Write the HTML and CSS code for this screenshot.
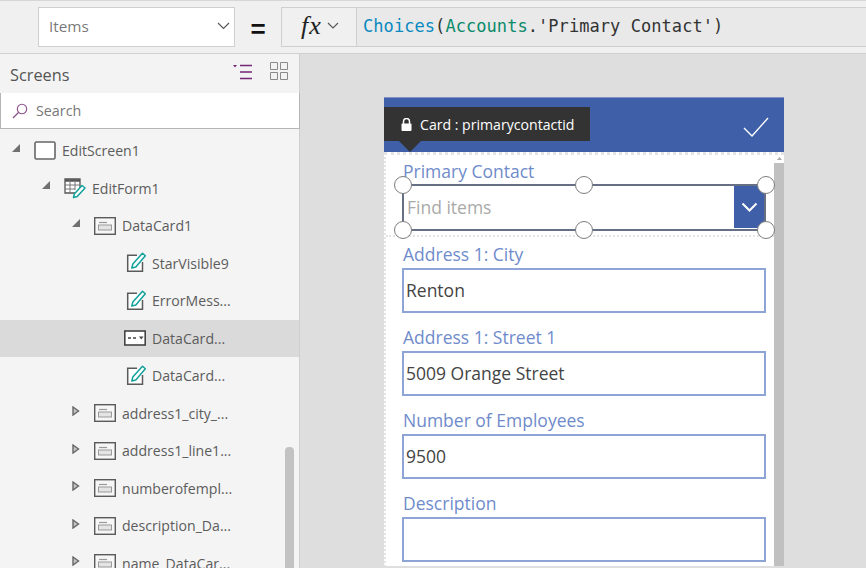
FILE: index.html
```html
<!DOCTYPE html>
<html lang="en">
<head>
<meta charset="utf-8">
<title>Items formula</title>
<link rel="stylesheet" href="styles.css">
</head>
<body>
<svg class="defs" width="0" height="0" aria-hidden="true">
  <symbol id="i-screen" viewBox="0 0 22 22"><rect x="1" y="2" width="20" height="17" rx="1.5" fill="#fff" stroke="#666" stroke-width="1.6"/></symbol>
  <symbol id="i-card" viewBox="0 0 22 22"><rect x="0.7" y="2.7" width="20.6" height="16.6" fill="#f6f6f6" stroke="#5a5a5a" stroke-width="1.4"/><path d="M5 7.5h8" stroke="#9a9a9a" stroke-width="1.2" fill="none"/><rect x="4.5" y="10" width="13" height="5" fill="#e4e4e4" stroke="#999" stroke-width="1"/></symbol>
  <symbol id="i-edit" viewBox="0 0 22 22"><path d="M13 3.200H3.700v16H18.500V10" fill="#fff" stroke="#5a5a5a" stroke-width="1.500"/><path d="M7.800 16l1-4L18.500 1.200l2.800 2.500L11.800 15z" fill="#fff" stroke="#12a19a" stroke-width="1.500" stroke-linejoin="round"/></symbol>
  <symbol id="i-table" viewBox="0 0 22 22"><path d="M1 2h15v14H1z" fill="#fff" stroke="#555" stroke-width="1.300"/><path d="M1 3.500h15" stroke="#555" stroke-width="2.500"/><path d="M1 8h15M1 12h10M6 3v13M11 3v10" stroke="#777" stroke-width="1" fill="none"/><path d="M9.500 20.500l.8-3.500L18 8.500l3 2.500-7.800 8.500z" fill="#fff" stroke="#12a19a" stroke-width="1.500" stroke-linejoin="round"/></symbol>
  <symbol id="i-drop" viewBox="0 0 22 22"><rect x="0.8" y="4" width="20.400" height="14" fill="#fff" stroke="#444" stroke-width="1.600"/><path d="M4 11h3M9 11h3" stroke="#444" stroke-width="1.300"/><path d="M15 9.500h4.500l-2.250 3z" fill="#444"/></symbol>
  <symbol id="c-open" viewBox="0 0 8 8"><path d="M8 0v8H0z" fill="#707070"/></symbol>
  <symbol id="c-closed" viewBox="0 0 8 10"><path d="M1 1l5.500 4L1 9z" fill="#c4c4c4" stroke="#666" stroke-width="1.400"/></symbol>
</svg>

<div class="page">
  <header class="topbar">
    <div class="prop">
      <span class="prop-name">Items</span>
      <svg class="chev" width="13" height="8" viewBox="0 0 13 8"><path d="M1 1l5.500 5.500L12 1" fill="none" stroke="#555" stroke-width="1.100"/></svg>
    </div>
    <div class="equals">=</div>
    <div class="fx">
      <span class="fx-mark">fx</span>
      <svg class="chev" width="12" height="7" viewBox="0 0 12 7"><path d="M1 1l5 5 5-5" fill="none" stroke="#555" stroke-width="1.100"/></svg>
    </div>
    <div class="formula"><span class="f-fn">Choices</span>(<span class="f-src">Accounts</span>.'Primary Contact')</div>
  </header>

  <div class="main">
    <aside class="side">
      <div class="side-head">
        <span class="side-title">Screens</span>
        <svg class="tool-list" width="21" height="16" viewBox="0 0 21 16"><path d="M1 1h4L3 3.500z" fill="#742774"/><path d="M8 1.500h12M8 8h12M8 14.500h12" stroke="#742774" stroke-width="1.300" fill="none"/></svg>
        <svg class="tool-grid" width="18" height="18" viewBox="0 0 18 18"><path d="M.5.500h7v7h-7zM10.500.500h7v7h-7zM.5 10.500h7v7h-7zM10.500 10.500h7v7h-7z" fill="none" stroke="#8a8a8a"/></svg>
      </div>
      <div class="search">
        <svg width="16" height="16" viewBox="0 0 16 16"><circle cx="10" cy="6" r="4.700" fill="none" stroke="#8a4f8a" stroke-width="1.100"/><path d="M6.500 9.500L1 15" stroke="#8a4f8a" stroke-width="1.300"/></svg>
        <span>Search</span>
      </div>
      <div class="tree">
        <div class="row l0"><svg class="caret"><use href="#c-open"/></svg><svg class="ico"><use href="#i-screen"/></svg><span>EditScreen1</span></div>
        <div class="row l1"><svg class="caret"><use href="#c-open"/></svg><svg class="ico"><use href="#i-table"/></svg><span>EditForm1</span></div>
        <div class="row l2"><svg class="caret"><use href="#c-open"/></svg><svg class="ico"><use href="#i-card"/></svg><span>DataCard1</span></div>
        <div class="row l3"><svg class="caret"></svg><svg class="ico"><use href="#i-edit"/></svg><span>StarVisible9</span></div>
        <div class="row l3"><svg class="caret"></svg><svg class="ico"><use href="#i-edit"/></svg><span>ErrorMess...</span></div>
        <div class="row l3 selected"><svg class="caret"></svg><svg class="ico"><use href="#i-drop"/></svg><span>DataCard...</span></div>
        <div class="row l3"><svg class="caret"></svg><svg class="ico"><use href="#i-edit"/></svg><span>DataCard...</span></div>
        <div class="row l2"><svg class="caret closed"><use href="#c-closed"/></svg><svg class="ico"><use href="#i-card"/></svg><span>address1_city_...</span></div>
        <div class="row l2"><svg class="caret closed"><use href="#c-closed"/></svg><svg class="ico"><use href="#i-card"/></svg><span>address1_line1...</span></div>
        <div class="row l2"><svg class="caret closed"><use href="#c-closed"/></svg><svg class="ico"><use href="#i-card"/></svg><span>numberofempl...</span></div>
        <div class="row l2"><svg class="caret closed"><use href="#c-closed"/></svg><svg class="ico"><use href="#i-card"/></svg><span>description_Da...</span></div>
        <div class="row l2"><svg class="caret closed"><use href="#c-closed"/></svg><svg class="ico"><use href="#i-card"/></svg><span>name_DataCar...</span></div>
        <div class="thumb"></div>
      </div>
    </aside>

    <main class="canvas">
      <section class="phone">
        <div class="phone-bar">
          <svg class="check" width="26" height="20" viewBox="0 0 26 20"><path d="M1 11l8 8L25 1" fill="none" stroke="#fff" stroke-width="1.400"/></svg>
        </div>
        <div class="tip">
          <svg width="11" height="13" viewBox="0 0 11 13"><path d="M2.500 6V3.500a3 3 0 0 1 6 0V6" fill="none" stroke="#fff" stroke-width="1.500"/><rect x="0.500" y="5.500" width="10" height="7.500" rx="1" fill="#fff"/></svg>
          <span>Card : primarycontactid</span>
        </div>
        <div class="form-wrap">
          <div class="form">
            <div class="card first">
              <div class="label">Primary Contact</div>
              <div class="combo">
                <span class="placeholder">Find items</span>
                <span class="combo-btn"><svg width="17" height="10" viewBox="0 0 17 10"><path d="M1.500 1.500l7 7 7-7" fill="none" stroke="#fff" stroke-width="2"/></svg></span>
                <i class="h h-tl"></i><i class="h h-tc"></i><i class="h h-tr"></i>
                <i class="h h-bl"></i><i class="h h-bc"></i><i class="h h-br"></i>
              </div>
            </div>
            <div class="card"><div class="label">Address 1: City</div><div class="input">Renton</div></div>
            <div class="card"><div class="label">Address 1: Street 1</div><div class="input">5009 Orange Street</div></div>
            <div class="card"><div class="label">Number of Employees</div><div class="input">9500</div></div>
            <div class="card"><div class="label">Description</div><div class="input"></div></div>
          </div>
          <div class="vscroll"><svg width="5" height="3" viewBox="0 0 5 3"><path d="M0 3l2.500-3L5 3z" fill="#aaa"/></svg><span class="vthumb"></span></div>
        </div>
      </section>
    </main>
  </div>
</div>
</body>
</html>
```

FILE: styles.css
```css
* { box-sizing: border-box; }
html, body { margin: 0; height: 100%; }
body { font-family: "Open Sans", "Noto Sans", sans-serif; overflow: hidden; background: #dedede; }
.defs { position: absolute; }
.page { width: 866px; height: 568px; display: flex; flex-direction: column; overflow: hidden; }

.topbar { height: 54px; flex: none; display: flex; align-items: flex-start; padding: 6px 0 0 38px; background: #f0f0f0; border-top: 1px solid #d6d6d6; border-bottom: 1px solid #d0d0d0; }
.prop { width: 197px; height: 40px; display: flex; align-items: center; justify-content: space-between; padding: 0 4px 2px 10px; background: #fff; border: 1px solid #cfcfcf; }
.prop-name { font-size: 15.300px; color: #7a7a7a; }
.equals { width: 46px; height: 40px; text-align: center; font: 700 26px/44px "Liberation Sans", sans-serif; color: #111; }
.fx { width: 76px; height: 40px; display: flex; align-items: center; gap: 5px; padding: 0 0 3px 19px; border: 1px solid #cfcfcf; background: #f0f0f0; }
.fx-mark { font: italic 26px/1 "Liberation Serif", serif; color: #222; letter-spacing: 1px; }
.formula { flex: 1; height: 40px; padding-left: 6px; background: #e9e9e9; border: 1px solid #cfcfcf; border-width: 1px 0; font: 17px/36px "DejaVu Sans Mono", monospace; letter-spacing: .06px; color: #333; white-space: nowrap; }
.f-fn { color: #0a8ac0; }
.f-src { color: #0a8a6a; }

.main { flex: 1; min-height: 0; display: flex; }

.side { width: 300px; flex: none; display: flex; flex-direction: column; background: #f4f4f4; border-right: 1px solid #cfcfcf; }
.side-head { height: 39px; flex: none; display: flex; align-items: center; padding: 2px 11px 0 10px; background: #f3f3f3; }
.side-title { flex: 1; font-size: 16.300px; color: #555; }
.tool-list { margin-right: 17px; margin-top: -5px; }
.tool-grid { margin-top: -7px; }
.search { height: 36px; flex: none; display: flex; align-items: center; gap: 8px; padding-left: 11px; background: #fff; border: 1px solid #b5b5b5; border-width: 0 1px 1px 1px; margin-right: -1px; font-size: 14.300px; color: #777; }
.tree { position: relative; flex: 1; min-height: 0; overflow: hidden; padding-top: 3px; }
.row { height: 37.500px; display: flex; align-items: center; font-size: 14.100px; color: #5c5c5c; white-space: nowrap; }
.row.selected { background: #dadada; }
.l0 { padding-left: 12px; }
.l1 { padding-left: 42px; }
.l2 { padding-left: 72px; }
.l3 { padding-left: 102px; }
.caret { width: 8px; height: 8px; margin-right: 14px; flex: none; margin-top: -6px; }
.caret.closed { height: 10px; margin-top: -4px; }
.ico { width: 22px; height: 22px; margin-right: 6px; flex: none; }
.thumb { position: absolute; left: 285px; top: 318px; width: 9px; height: 140px; background: #c2c2c2; border-radius: 4px 4px 0 0; }

.canvas { flex: 1; min-width: 0; padding: 43px 0 0 84px; background: #dedede; }
.phone { position: relative; width: 400px; height: 469px; background: #fff; overflow: hidden; }
.phone-bar { height: 55px; display: flex; justify-content: flex-end; align-items: flex-start; padding: 19px 15px 0 0; background: #3f5fa9; border-top: 1px solid #7f94c4; }
.tip { position: absolute; left: 0; top: 10px; height: 34px; width: 206px; display: flex; align-items: center; gap: 8px; padding-left: 17px; background: #333; color: #fff; font-size: 14.100px; }
.tip::after { content: ""; position: absolute; left: 15px; top: 34px; border: 11px solid transparent; border-top-color: #333; border-bottom: 0; }
.form-wrap { display: flex; height: 415px; border-top: 3px dotted #e4e4e4; border-left: 2px dotted #e4e4e4; }
.form { flex: 1; min-width: 0; }
.vscroll { width: 10px; flex: none; display: flex; flex-direction: column; align-items: center; gap: 3px; padding-top: 2px; background: #fff; }
.vthumb { display: block; width: 100%; flex: 1; background: #c0c0c0; }

.card { height: 83px; padding: 2px 8px 0 16px; }
.card.first { height: 82px; padding-top: 4px; border-bottom: 2px dotted #e4e4e4; }
.label { height: 27px; margin: 2px 0 0 1px; font-size: 17.500px; line-height: 27px; color: #6f8bcb; white-space: nowrap; }
.first .label { height: 25px; line-height: 24px; margin-top: 0; }
.input { height: 45px; padding-left: 2px; border: 2px solid #8ea3d6; font-size: 17.500px; line-height: 41px; color: #444; }
.combo { position: relative; height: 47px; padding-left: 3px; display: flex; justify-content: space-between; border: 2px solid #676f85; font-size: 17.500px; line-height: 43px; }
.placeholder { color: #a9a9a9; }
.combo-btn { width: 30px; height: 42px; display: flex; align-items: center; justify-content: center; background: #3f5fa9; }
.h { position: absolute; width: 18px; height: 18px; border: 1.500px solid #7d7d7d; border-radius: 50%; background: #fff; }
.h-tl { left: -10px; top: -10px; }
.h-tc { left: 171px; top: -10px; }
.h-tr { right: -11px; top: -10px; }
.h-bl { left: -10px; bottom: -10px; }
.h-bc { left: 171px; bottom: -10px; }
.h-br { right: -11px; bottom: -10px; }
```
